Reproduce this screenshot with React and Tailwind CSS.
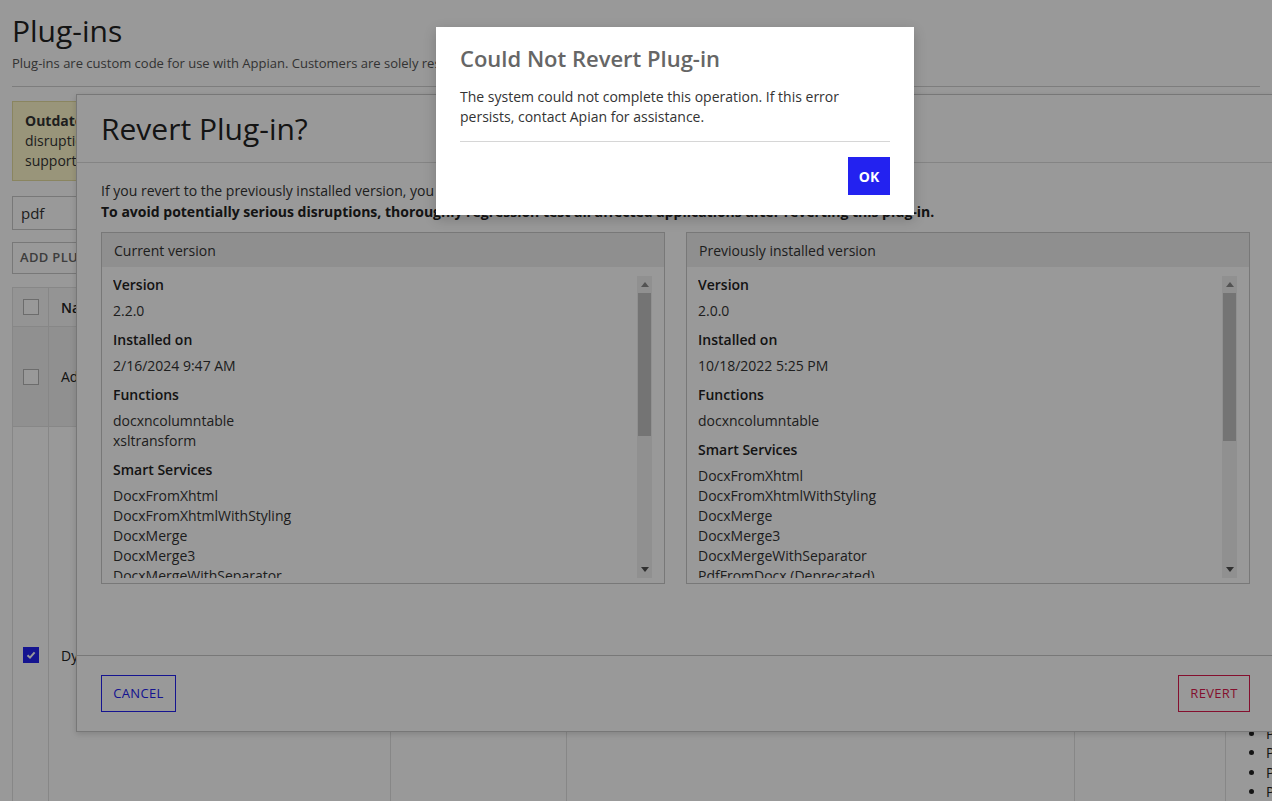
import React from 'react';

const currentSmart = [
  'DocxFromXhtml',
  'DocxFromXhtmlWithStyling',
  'DocxMerge',
  'DocxMerge3',
  'DocxMergeWithSeparator',
  'PdfFromDocx (Deprecated)',
  'PdfFromDocxWithFonts',
  'XlsxFromTemplate',
];

const previousSmart = [
  'DocxFromXhtml',
  'DocxFromXhtmlWithStyling',
  'DocxMerge',
  'DocxMerge3',
  'DocxMergeWithSeparator',
  'PdfFromDocx (Deprecated)',
  'PdfFromDocxWithFonts',
];

const bulletItems = [
  'DocxFromXhtml', 'DocxFromXhtmlWithStyling', 'DocxMerge', 'DocxMerge3',
  'DocxMergeWithSeparator', 'PdfFromDocx', 'PdfFromDocxWithFonts', 'PdfFromXhtml',
  'PdfMerge', 'PdfSplit', 'PdfToImage', 'PdfWatermark', 'PdfProtect',
  'PdfFromHtml', 'PdfFlatten', 'PdfFromTemplate', 'PdfFromXslt', 'PdfFromXml',
  'PdfFromText', 'PdfCompress',
];

const Checkbox = ({ checked }) =>
  checked ? (
    <div className="w-4 h-4 bg-[#2322f0] flex items-center justify-center">
      <svg width="10" height="10" viewBox="0 0 10 10">
        <path d="M1.5 5.2 L4 7.6 L8.6 2.4" stroke="white" strokeWidth="2" fill="none" />
      </svg>
    </div>
  ) : (
    <div className="w-4 h-4 border border-[#b5b5b5] bg-white" />
  );

const Cell = ({ w, children, className = '' }) => (
  <div className={`${w} shrink-0 border-r border-[#e2e2e2] flex ${className}`}>{children}</div>
);

const Scrollbar = ({ thumb }) => (
  <div className="w-[15px] h-[302px] bg-[#f1f1f1] flex flex-col items-center">
    <div className="h-[17px] flex items-center justify-center">
      <svg width="8" height="5" viewBox="0 0 8 5"><path d="M0 5 L4 0 L8 5 Z" fill="#8a8a8a" /></svg>
    </div>
    <div className={`w-[13px] ${thumb} bg-[#c1c1c1]`} />
    <div className="flex-1" />
    <div className="h-[17px] flex items-center justify-center">
      <svg width="8" height="5" viewBox="0 0 8 5"><path d="M0 0 L4 5 L8 0 Z" fill="#505050" /></svg>
    </div>
  </div>
);

const Field = ({ label, values, first }) => (
  <div className={first ? '' : 'mt-[9px]'}>
    <div className="font-semibold text-[#222] mb-[6px]">{label}</div>
    {values.map((v) => (
      <div key={v}>{v}</div>
    ))}
  </div>
);

const VersionPanel = ({ title, version, installed, functions, smart, thumb }) => (
  <div className="border border-[#c8c8c8] h-[352px] flex flex-col">
    <div className="h-[34px] bg-[#eeeeee] px-3 flex items-center text-[14px] text-[#333]">{title}</div>
    <div className="flex mt-[8px] ml-[11px] mr-[12px]">
      <div className="flex-1 h-[303px] overflow-hidden text-[14px] leading-[20px] text-[#333]">
        <Field first label="Version" values={[version]} />
        <Field label="Installed on" values={[installed]} />
        <Field label="Functions" values={functions} />
        <Field label="Smart Services" values={smart} />
      </div>
      <div className="pt-[1px]">
        <Scrollbar thumb={thumb} />
      </div>
    </div>
  </div>
);

const Page = () => (
  <div className="px-3 pt-[11px] text-[#222]">
    <h1 className="text-[30px] leading-[40px] font-normal">Plug-ins</h1>
    <p className="mt-[3px] text-[13px] leading-[18px] text-[#555] pb-[14px] border-b border-[#d0d0d0]">
      Plug-ins are custom code for use with Appian. Customers are solely responsible for plug-in usage.
    </p>
    <div className="mt-[14px] w-[600px] h-[80px] bg-[#fff9cc] border border-[#e6dea0] px-3 py-[9px] text-[14px] leading-[20px] text-[#333]">
      <div className="font-bold">Outdated plug-ins</div>
      <div>disruptions may occur when plug-ins are not</div>
      <div>supported</div>
    </div>
    <div className="mt-[15px] w-[300px] h-[34px] border border-[#c8c8c8] flex items-center px-2 text-[15px] text-[#333]">
      pdf
    </div>
    <div className="mt-[12px] inline-flex h-[32px] items-center border border-[#c8c8c8] px-[7px] text-[13px] font-semibold text-[#666] tracking-wide">
      ADD PLUG-IN
    </div>
    <div className="mt-[13px] border-l border-t border-[#e2e2e2] w-[1425px] text-[14px]">
      <div className="flex h-[39px] bg-[#f7f7f7] border-b border-[#e2e2e2]">
        <Cell w="w-[36px]" className="items-center justify-center"><Checkbox /></Cell>
        <Cell w="w-[342px]" className="items-center px-3 font-semibold">Name</Cell>
        <Cell w="w-[176px]" className="items-center px-3 font-semibold">Version</Cell>
        <Cell w="w-[508px]" className="items-center px-3 font-semibold">Description</Cell>
        <Cell w="w-[151px]" className="items-center px-3 font-semibold">Functions</Cell>
        <Cell w="w-[200px]" className="items-center px-3 font-semibold">Smart Services</Cell>
      </div>
      <div className="flex h-[100px] bg-[#f0f0f0] border-b border-[#e2e2e2]">
        <Cell w="w-[36px]" className="items-center justify-center"><Checkbox /></Cell>
        <Cell w="w-[342px]" className="items-center px-3">Advanced PDF Tools</Cell>
        <Cell w="w-[176px]" className="items-center px-3">1.4.0</Cell>
        <Cell w="w-[508px]" className="items-center px-3">PDF utilities</Cell>
        <Cell w="w-[151px]" className="items-center px-3" />
        <Cell w="w-[200px]" className="items-center px-3" />
      </div>
      <div className="flex h-[456px] overflow-hidden">
        <Cell w="w-[36px]" className="items-center justify-center"><Checkbox checked /></Cell>
        <Cell w="w-[342px]" className="items-center px-3">Dynamic Document Generation</Cell>
        <Cell w="w-[176px]" className="items-center px-3">2.2.0</Cell>
        <Cell w="w-[508px]" className="items-center px-3">Document generation</Cell>
        <Cell w="w-[151px]" className="items-center px-3" />
        <Cell w="w-[200px]" className="items-start">
          <ul className="list-disc pl-10 pt-[4px] leading-[19.5px] text-[#222] whitespace-nowrap">
            {bulletItems.map((b) => (
              <li key={b}>{b}</li>
            ))}
          </ul>
        </Cell>
      </div>
    </div>
  </div>
);

const RevertModal = () => (
  <div className="absolute left-[76px] top-[94px] w-[1199px] bg-white border border-[#c6c6c6] shadow-[0_2px_6px_rgba(0,0,0,0.15)]">
    <div className="h-[68px] px-6 flex items-center border-b border-[#dddddd]">
      <h2 className="text-[30px] leading-[40px] text-[#222]">Revert Plug-in?</h2>
    </div>
    <div className="h-[492px] px-6 pt-[17px]">
      <p className="text-[14px] leading-[21px] text-[#333]">
        If you revert to the previously installed version, you will lose any changes made in the current version.
      </p>
      <p className="text-[14px] leading-[21px] font-bold text-[#222]">
        To avoid potentially serious disruptions, thoroughly regression test all affected applications after reverting this plug-in.
      </p>
      <div className="mt-[10px] grid grid-cols-2 gap-[21px]">
        <VersionPanel
          title="Current version"
          version="2.2.0"
          installed="2/16/2024 9:47 AM"
          functions={['docxncolumntable', 'xsltransform']}
          smart={currentSmart}
          thumb="h-[143px]"
        />
        <VersionPanel
          title="Previously installed version"
          version="2.0.0"
          installed="10/18/2022 5:25 PM"
          functions={['docxncolumntable']}
          smart={previousSmart}
          thumb="h-[148px]"
        />
      </div>
    </div>
    <div className="border-t border-[#c8c8c8] px-6 pt-[19px] pb-[19px] flex justify-between">
      <button className="h-[37px] w-[75px] border border-[#2322f0] text-[#2322f0] text-[13px] tracking-wide bg-white">
        CANCEL
      </button>
      <button className="h-[37px] w-[72px] border border-[#dc1a4d] text-[#dc1a4d] text-[13px] tracking-wide bg-white">
        REVERT
      </button>
    </div>
  </div>
);

const ErrorDialog = () => (
  <div className="absolute left-[436px] top-[27px] w-[478px] bg-white px-6 pt-[15px] pb-[20px] shadow-[0_4px_12px_rgba(0,0,0,0.2)]">
    <h3 className="text-[22px] leading-[32px] font-semibold text-[#666]">Could Not Revert Plug-in</h3>
    <p className="mt-[13px] text-[14px] leading-[20px] text-[#333]">
      The system could not complete this operation. If this error persists, contact Apian for assistance.
    </p>
    <div className="mt-[14px] border-t border-[#d6d6d6]" />
    <div className="mt-[15px] flex justify-end">
      <button className="h-[38px] w-[42px] bg-[#2322f0] text-white text-[14px] font-bold">OK</button>
    </div>
  </div>
);

export default function App() {
  return (
    <div className="relative w-[1272px] h-[801px] overflow-hidden bg-white font-['Open_Sans',sans-serif]">
      <Page />
      <RevertModal />
      <div className="absolute inset-0 bg-black/40" />
      <ErrorDialog />
    </div>
  );
}
